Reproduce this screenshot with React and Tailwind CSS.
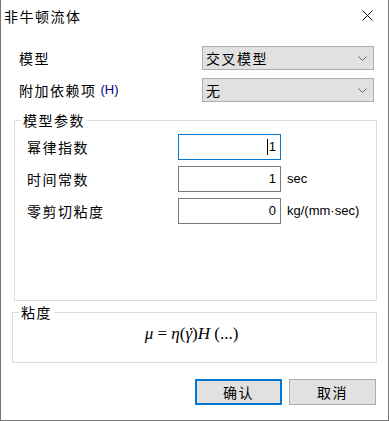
import React from "react";

const cjk = { fontFamily: '"Noto Sans CJK SC", "Noto Sans", sans-serif' };
const lat = { fontFamily: '"Liberation Sans", Arial, sans-serif' };
const serif = { fontFamily: '"Liberation Serif", "Times New Roman", serif' };

function Chevron() {
  return (
    <svg width="9" height="5" viewBox="0 0 9 5" className="shrink-0">
      <path d="M0.5 0.5 L4.5 4.5 L8.5 0.5" fill="none" stroke="#606060" strokeWidth="1" />
    </svg>
  );
}

function Select({ value }) {
  return (
    <div className="flex h-[24px] w-[172px] items-center justify-between border border-[#adadad] bg-[#e1e1e1] pl-[3px] pr-[6px]">
      <span className="text-[14px] leading-[20px] tracking-[1.5px] text-black" style={cjk}>
        {value}
      </span>
      <Chevron />
    </div>
  );
}

function Field({ label, value, unit, focused }) {
  return (
    <div className="flex h-[26px] items-center">
      <span className="w-[151px] text-[14px] leading-[20px] tracking-[1.5px] text-black" style={cjk}>
        {label}
      </span>
      <div
        className={
          "flex h-[26px] w-[103px] items-center justify-end border bg-white pr-[4px] " +
          (focused ? "border-[#0078d7]" : "border-[#7a7a7a]")
        }
      >
        {focused && <span className="mr-[1px] h-[16px] w-[1px] bg-black" />}
        <span className="text-[13px] leading-[16px] text-black" style={lat}>
          {value}
        </span>
      </div>
      {unit && (
        <span className="ml-[6px] text-[13px] leading-[16px] text-black" style={lat}>
          {unit}
        </span>
      )}
    </div>
  );
}

export default function App() {
  return (
    <div className="flex h-[421px] w-[389px] flex-col border-b border-l border-r border-[#777777] bg-white">
      <div className="flex h-[31px] items-center justify-between pl-[3px] pr-[15px]">
        <span className="text-[14px] leading-[20px] tracking-[1.5px] text-black" style={cjk}>
          非牛顿流体
        </span>
        <svg width="11" height="11" viewBox="0 0 11 11">
          <path d="M0.5 0.5 L10.5 10.5 M10.5 0.5 L0.5 10.5" stroke="#111" strokeWidth="1" />
        </svg>
      </div>

      <div className="mt-[15px] flex flex-col gap-[8px] pl-[18px]">
        <div className="flex items-center">
          <span className="w-[183px] text-[14px] leading-[20px] tracking-[1.5px] text-black" style={cjk}>
            模型
          </span>
          <Select value="交叉模型" />
        </div>
        <div className="flex items-center">
          <span className="flex w-[183px] items-center text-[14px] leading-[20px] tracking-[1.5px] text-black" style={cjk}>
            附加依赖项
            <span className="ml-[4px] text-[13px] tracking-normal text-[#000080]" style={lat}>
              (H)
            </span>
          </span>
          <Select value="无" />
        </div>
      </div>

      <fieldset className="ml-[13px] mt-[8px] h-[191px] w-[363px] border border-[#dcdcdc] pl-[12px] pt-[4px]">
        <legend className="-ml-[6px] px-[2px] text-[14px] leading-[20px] tracking-[1.5px] text-black" style={cjk}>
          模型参数
        </legend>
        <div className="flex flex-col gap-[6px]">
          <Field label="幂律指数" value="1" focused />
          <Field label="时间常数" value="1" unit="sec" />
          <Field label="零剪切粘度" value="0" unit="kg/(mm·sec)" />
        </div>
      </fieldset>

      <fieldset className="ml-[11px] mt-[1px] h-[61px] w-[365px] border border-[#dcdcdc] pt-[2px]">
        <legend className="ml-[6px] px-[2px] text-[14px] leading-[20px] tracking-[1.5px] text-black" style={cjk}>
          粘度
        </legend>
        <div className="flex justify-center pr-[6px] text-[17px] leading-[20px] text-black" style={serif}>
          <span className="whitespace-pre">
            <i>μ</i>
            {" = "}
            <i>η</i>(
            <span className="relative inline-block">
              <i>γ</i>
              <span className="absolute left-[5px] top-[4px] h-[2px] w-[2px] rounded-full bg-black" />
            </span>
            )<i>H</i>
            {" "}(...)
          </span>
        </div>
      </fieldset>

      <div className="mt-[16px] flex justify-end gap-[7px] pr-[12px]">
        <button
          className="flex h-[26px] w-[87px] items-center justify-center border-2 border-[#0078d7] bg-[#e1e1e1] text-[14px] leading-[20px] tracking-[1.5px] text-black"
          style={cjk}
        >
          确认
        </button>
        <button
          className="flex h-[26px] w-[87px] items-center justify-center border border-[#adadad] bg-[#e1e1e1] text-[14px] leading-[20px] tracking-[1.5px] text-black"
          style={cjk}
        >
          取消
        </button>
      </div>
    </div>
  );
}
